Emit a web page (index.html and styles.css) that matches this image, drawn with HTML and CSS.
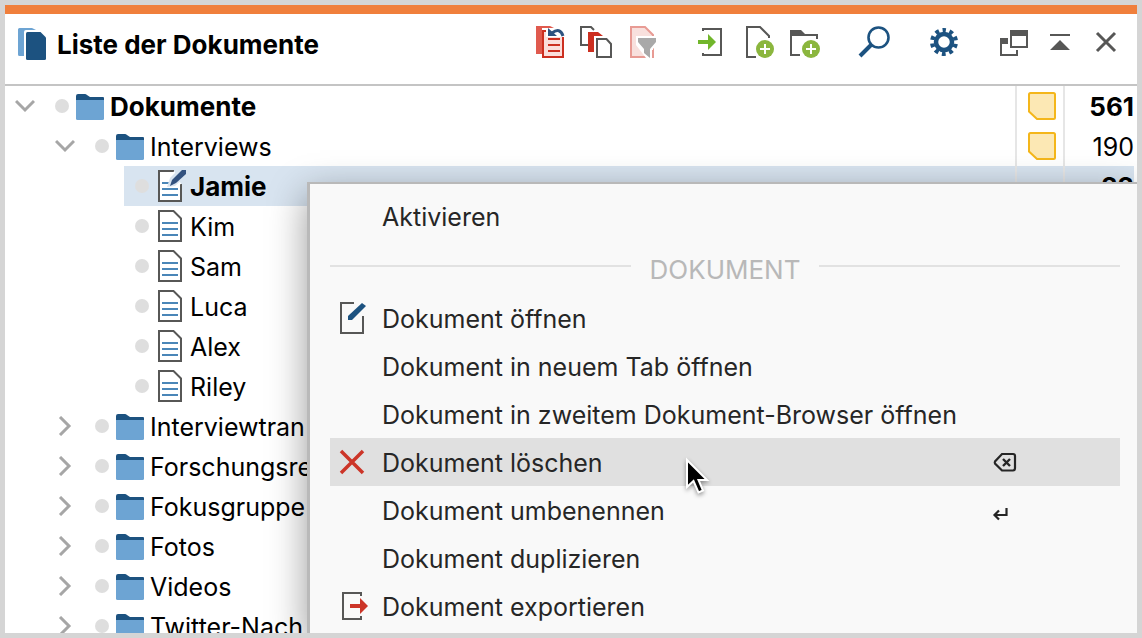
FILE: index.html
```
<!DOCTYPE html>
<html lang="de">
<head>
    <meta charset="UTF-8">
    <title>Liste der Dokumente</title>
    <link rel="stylesheet" href="styles.css">
</head>
<body>

    <!-- Shared icons -->
    <svg class="sprite" aria-hidden="true">
        <symbol id="folder" viewBox="0 0 28 28">
            <path d="M0 9V4Q0 2 2 2H9Q10 2 11 3L14 5H27Q28 5 28 6V9Z" fill="#1c5280"/>
            <path d="M0 8H28V26.500Q28 28 26.500 28H1.500Q0 28 0 26.500Z" fill="#6da4d3"/>
        </symbol>
        <symbol id="doc" viewBox="0 0 28 32">
            <path d="M3 1H17.500L25 8.500V31H3Z" fill="#fff" stroke="#575756" stroke-width="2"/>
            <path d="M6 13H22M6 19H22M6 25H22" stroke="#4a86b8" stroke-width="2"/>
        </symbol>
        <symbol id="memo" viewBox="0 0 28 28">
            <path d="M2.500 1H25.500Q27 1 27 2.500V25.500Q27 27 25.500 27H9L1 19.500V2.500Q1 1 2.500 1Z" fill="#fce8b4" stroke="#f4b61a" stroke-width="2"/>
        </symbol>
        <symbol id="down" viewBox="0 0 20 20">
            <path d="M1 5L10 14L19 5" fill="none" stroke="#a6a6a6" stroke-width="3"/>
        </symbol>
        <symbol id="right" viewBox="0 0 20 20">
            <path d="M5 1L14 10L5 19" fill="none" stroke="#a6a6a6" stroke-width="3"/>
        </symbol>
    </svg>

    <div class="panel">
        <header class="header">
            <svg class="logo" viewBox="0 0 28 32">
                <path d="M1.500 0H14L18 2H8Q6 2 6 4V28H1.500Q0 28 0 26.500V1.500Q0 0 1.500 0Z" fill="#6da4d3"/>
                <path d="M9.500 4H22.500L28 9.500V30.500Q28 32 26.500 32H9.500Q8 32 8 30.500V5.500Q8 4 9.500 4Z" fill="#1c5280"/>
            </svg>
            <h1 class="title">Liste der Dokumente</h1>

            <div class="tool-group">
                <button class="tool" aria-label="Aktivierungen zurücksetzen">
                    <svg viewBox="0 0 32 32">
                        <path d="M2 0H16L20 2H8V28H2Z" fill="#e05a4e"/>
                        <path d="M9 5H29V31H9Z" fill="#fbdedb" stroke="#cc2f20" stroke-width="2"/>
                        <path d="M14 13H26M14 19H26M14 25H26" stroke="#cc2f20" stroke-width="2"/>
                        <path d="M12 2H31V11H12Z" fill="#fff"/>
                        <path d="M18 7Q26 1 29 10" fill="none" stroke="#2d527f" stroke-width="3"/>
                        <path d="M14 2V10H23Z" fill="#2d527f"/>
                    </svg>
                </button>
                <button class="tool" aria-label="Aktivierte Dokumente">
                    <svg viewBox="0 0 32 32">
                        <path d="M14 4L11 1H1V19H8" fill="none" stroke="#575756" stroke-width="2"/>
                        <path d="M8 6H18L23 10H14V26H8Z" fill="#cc2f20"/>
                        <path d="M17 13H26.500L31 18V31H17Z" fill="#fff" stroke="#575756" stroke-width="2"/>
                    </svg>
                </button>
                <button class="tool" aria-label="Filter">
                    <svg viewBox="0 0 32 32">
                        <path d="M5 1H19L27 9V31H5Z" fill="#f8e0dd" stroke="#e89b94" stroke-width="2"/>
                        <path d="M10 10H32V17L27 23V32H20L10 19Z" fill="#fff"/>
                        <path d="M12 12H30V16L24 23V32L18 27V23L12 16Z" fill="#a9a9a9"/>
                        <path d="M27 24V32" stroke="#e89b94" stroke-width="2"/>
                    </svg>
                </button>
            </div>

            <div class="tool-group">
                <button class="tool" aria-label="Dokumente importieren">
                    <svg viewBox="0 0 32 32">
                        <path d="M7 5V3H25V29H7V27" fill="none" stroke="#575756" stroke-width="2"/>
                        <path d="M2 14H12V8L20 16L12 24V18H2Z" fill="#71b62b"/>
                    </svg>
                </button>
                <button class="tool" aria-label="Neues Textdokument">
                    <svg viewBox="0 0 32 32">
                        <path d="M14 31H5V1H18L27 10V12" fill="none" stroke="#575756" stroke-width="2"/>
                        <circle cx="23" cy="23" r="9" fill="#8bb63e"/>
                        <path d="M23 18V28M18 23H28" stroke="#fff" stroke-width="2"/>
                    </svg>
                </button>
                <button class="tool" aria-label="Neue Dokumentgruppe">
                    <svg viewBox="0 0 32 32">
                        <path d="M2 4H13L17 8H30V13H28V10H4V28H12V30H2Z" fill="#575756"/>
                        <circle cx="23" cy="23" r="9" fill="#8bb63e"/>
                        <path d="M23 18V28M18 23H28" stroke="#fff" stroke-width="2"/>
                    </svg>
                </button>
            </div>

            <div class="tool-group">
                <button class="tool" aria-label="Suchen">
                    <svg viewBox="0 0 32 32">
                        <circle cx="20.500" cy="11.500" r="10" fill="none" stroke="#1c5280" stroke-width="2.600"/>
                        <path d="M13 19L2 30" stroke="#1c5280" stroke-width="4"/>
                    </svg>
                </button>
            </div>

            <div class="tool-group">
                <button class="tool" aria-label="Einstellungen">
                    <svg viewBox="0 0 32 32">
                        <circle cx="16" cy="16" r="8" fill="none" stroke="#1c5280" stroke-width="4.500"/>
                        <circle cx="16" cy="16" r="11.800" fill="none" stroke="#1c5280" stroke-width="4.400" stroke-dasharray="3.800 3.614" stroke-dashoffset="1.900" transform="rotate(-90 16 16)"/>
                    </svg>
                </button>
            </div>

            <div class="tool-group">
                <button class="tool" aria-label="Abdocken">
                    <svg viewBox="0 0 32 32">
                        <path d="M12 4H30V22H12ZM14 10V20H28V10Z" fill="#575756" fill-rule="evenodd"/>
                        <path d="M2 12H10V18H4V28H18V24H20V30H2Z" fill="#575756"/>
                    </svg>
                </button>
                <button class="tool" aria-label="Minimieren">
                    <svg viewBox="0 0 32 32">
                        <path d="M6 8H26V10H6ZM16 14L26 24H6Z" fill="#575756"/>
                    </svg>
                </button>
                <button class="tool" aria-label="Schließen">
                    <svg viewBox="0 0 32 32">
                        <path d="M7 7L25 25M25 7L7 25" stroke="#575756" stroke-width="3"/>
                    </svg>
                </button>
            </div>
        </header>

        <!-- Document tree -->
        <ul class="tree">
            <li class="row root">
                <button class="twisty" aria-label="Einklappen"><svg><use href="#down"/></svg></button>
                <span class="dot"></span>
                <svg class="icon"><use href="#folder"/></svg>
                <span class="name">Dokumente</span>
                <span class="memo"><svg><use href="#memo"/></svg></span>
                <span class="count">561</span>
            </li>
            <li class="row group">
                <button class="twisty" aria-label="Einklappen"><svg><use href="#down"/></svg></button>
                <span class="dot"></span>
                <svg class="icon"><use href="#folder"/></svg>
                <span class="name">Interviews</span>
                <span class="memo"><svg><use href="#memo"/></svg></span>
                <span class="count">190</span>
            </li>
            <li class="row doc selected">
                <span class="dot"></span>
                <svg class="icon" viewBox="0 0 28 32">
                    <path d="M18 1H3V31H25V14" fill="#fff" stroke="#575756" stroke-width="2"/>
                    <path d="M18 1L25 14L16 17L12 14Z" fill="#fff"/>
                    <path d="M6 13H13M6 19H22M6 25H22" stroke="#4a86b8" stroke-width="2"/>
                    <path d="M11 17L14 8L22 0H30V6L19 16Z" fill="#d8e4f0"/>
                    <path d="M14 16L16 10L26 0H30V4L20 13Z" fill="#33527f"/>
                </svg>
                <span class="name">Jamie</span>
                <span class="memo"></span>
                <span class="count">22</span>
            </li>
            <li class="row doc">
                <span class="dot"></span>
                <svg class="icon"><use href="#doc"/></svg>
                <span class="name">Kim</span>
                <span class="memo"></span>
                <span class="count"></span>
            </li>
            <li class="row doc">
                <span class="dot"></span>
                <svg class="icon"><use href="#doc"/></svg>
                <span class="name">Sam</span>
                <span class="memo"></span>
                <span class="count"></span>
            </li>
            <li class="row doc">
                <span class="dot"></span>
                <svg class="icon"><use href="#doc"/></svg>
                <span class="name">Luca</span>
                <span class="memo"></span>
                <span class="count"></span>
            </li>
            <li class="row doc">
                <span class="dot"></span>
                <svg class="icon"><use href="#doc"/></svg>
                <span class="name">Alex</span>
                <span class="memo"></span>
                <span class="count"></span>
            </li>
            <li class="row doc">
                <span class="dot"></span>
                <svg class="icon"><use href="#doc"/></svg>
                <span class="name">Riley</span>
                <span class="memo"></span>
                <span class="count"></span>
            </li>
            <li class="row group">
                <button class="twisty" aria-label="Ausklappen"><svg><use href="#right"/></svg></button>
                <span class="dot"></span>
                <svg class="icon"><use href="#folder"/></svg>
                <span class="name">Interviewtran</span>
            </li>
            <li class="row group">
                <button class="twisty" aria-label="Ausklappen"><svg><use href="#right"/></svg></button>
                <span class="dot"></span>
                <svg class="icon"><use href="#folder"/></svg>
                <span class="name">Forschungsre</span>
            </li>
            <li class="row group">
                <button class="twisty" aria-label="Ausklappen"><svg><use href="#right"/></svg></button>
                <span class="dot"></span>
                <svg class="icon"><use href="#folder"/></svg>
                <span class="name">Fokusgruppe</span>
            </li>
            <li class="row group">
                <button class="twisty" aria-label="Ausklappen"><svg><use href="#right"/></svg></button>
                <span class="dot"></span>
                <svg class="icon"><use href="#folder"/></svg>
                <span class="name">Fotos</span>
            </li>
            <li class="row group">
                <button class="twisty" aria-label="Ausklappen"><svg><use href="#right"/></svg></button>
                <span class="dot"></span>
                <svg class="icon"><use href="#folder"/></svg>
                <span class="name">Videos</span>
            </li>
            <li class="row group">
                <button class="twisty" aria-label="Ausklappen"><svg><use href="#right"/></svg></button>
                <span class="dot"></span>
                <svg class="icon"><use href="#folder"/></svg>
                <span class="name">Twitter-Nach</span>
            </li>
        </ul>

        <!-- Context menu -->
        <div class="menu" role="menu">
            <button class="item" role="menuitem">
                <span class="item-icon"></span>
                <span class="label">Aktivieren</span>
            </button>
            <div class="section"><span>DOKUMENT</span></div>
            <button class="item" role="menuitem">
                <span class="item-icon">
                    <svg viewBox="0 0 28 32">
                        <path d="M14 1H1V31H23V14" fill="none" stroke="#575756" stroke-width="2"/>
                        <path d="M8 18V14L22 1L26 4L12 18Z" fill="#1c5280"/>
                    </svg>
                </span>
                <span class="label">Dokument öffnen</span>
            </button>
            <button class="item" role="menuitem">
                <span class="item-icon"></span>
                <span class="label">Dokument in neuem Tab öffnen</span>
            </button>
            <button class="item" role="menuitem">
                <span class="item-icon"></span>
                <span class="label">Dokument in zweitem Dokument-Browser öffnen</span>
            </button>
            <button class="item active" role="menuitem">
                <span class="item-icon">
                    <svg viewBox="0 0 28 32">
                        <path d="M1 5L23 27M23 5L1 27" stroke="#cc3528" stroke-width="3.500"/>
                    </svg>
                </span>
                <span class="label">Dokument löschen</span>
                <svg class="shortcut" viewBox="0 0 24 24">
                    <path d="M10 4H21Q23 4 23 6V18Q23 20.500 21 20.500H10L3 13.500Q2.500 12.500 3 11.500Z" fill="none" stroke="#262626" stroke-width="2.200"/>
                    <path d="M11 9L18 16M18 9L11 16" stroke="#262626" stroke-width="2.400"/>
                </svg>
            </button>
            <button class="item" role="menuitem">
                <span class="item-icon"></span>
                <span class="label">Dokument umbenennen</span>
                <svg class="shortcut" viewBox="0 0 24 24">
                    <path d="M14.500 10V17H3M7 12.500L2.500 17L7 21.500" fill="none" stroke="#262626" stroke-width="2.200"/>
                </svg>
            </button>
            <button class="item" role="menuitem">
                <span class="item-icon"></span>
                <span class="label">Dokument duplizieren</span>
            </button>
            <button class="item" role="menuitem">
                <span class="item-icon">
                    <svg viewBox="0 0 28 32">
                        <path d="M21 6V3H3V29H21V26" fill="none" stroke="#575756" stroke-width="2"/>
                        <path d="M10 14H20V8L28 16L20 24V18H10Z" fill="#cc3528"/>
                    </svg>
                </span>
                <span class="label">Dokument exportieren</span>
            </button>
        </div>

        <svg class="cursor" viewBox="0 0 24 38">
            <path d="M1 1V28L7.500 22L12.500 33.500L17 31.500L12.500 21H21Z" fill="#000" stroke="#fff" stroke-width="2"/>
        </svg>
    </div>

</body>
</html>
```
FILE: styles.css
```
* {
    box-sizing: border-box;
}

body {
    font-family: Inter, "Liberation Sans", sans-serif;
    font-size: 25px;
    font-optical-sizing: none;
    line-height: 40px;
    background-color: #d5d5d5;
    margin: 0;
    padding: 5px;
    height: 100vh;
    color: #000;
}

button {
    font: inherit;
    font-optical-sizing: inherit;
    color: inherit;
    background: none;
    border: none;
    margin: 0;
    padding: 0;
}

svg {
    display: block;
    flex: none;
    overflow: visible;
}

.sprite {
    position: absolute;
    width: 0;
    height: 0;
}

.panel {
    position: relative;
    height: 100%;
    background-color: #fff;
    border-top: 9px solid #f07f3c;
    overflow: hidden;
}

/* Header */
.header {
    display: flex;
    align-items: flex-start;
    gap: 38px;
    height: 72px;
    padding: 12px 15px 0 13px;
    border-bottom: 2px solid #c4c4c4;
}

.logo {
    width: 28px;
    height: 32px;
    margin-top: 2px;
    margin-right: -27px;
}

.title {
    flex: 1;
    margin: 0;
    font-size: 26px;
    line-height: 38px;
    font-weight: 700;
    white-space: nowrap;
}

.tool-group {
    display: flex;
    gap: 14px;
}

.tool svg {
    width: 32px;
    height: 32px;
}

/* Tree */
.tree {
    list-style: none;
    margin: 0;
    padding: 0;
}

.row {
    display: flex;
    align-items: center;
    height: 40px;
    padding-right: 3px;
}

.root {
    padding-left: 10px;
    font-size: 26px;
    font-weight: 700;
}

.group {
    padding-left: 50px;
}

.doc {
    margin-left: 119px;
    padding-left: 11px;
}

.selected {
    background: linear-gradient(#d8e4f0, #d8e4f0) no-repeat 0 0 / calc(100% - 3px) 100%;
    font-size: 26px;
    font-weight: 700;
}

.twisty {
    margin-right: 20px;
}

.twisty svg {
    width: 20px;
    height: 20px;
}

.dot {
    width: 14px;
    height: 14px;
    margin-right: 7px;
    border-radius: 50%;
    background-color: #dedede;
}

.icon {
    width: 28px;
    height: 28px;
    margin-right: 6px;
}

.doc .icon {
    height: 32px;
}

.name {
    flex: 1;
    padding-top: 2px;
    white-space: nowrap;
}

.memo {
    display: flex;
    align-items: center;
    width: 48px;
    height: 40px;
    padding-left: 11px;
    border-left: 2px solid #e6e6e6;
}

.memo svg {
    width: 28px;
    height: 28px;
}

.count {
    width: 71px;
    height: 40px;
    padding-top: 1px;
    border-left: 2px solid #e6e6e6;
    text-align: right;
}

/* Context menu */
.menu {
    position: absolute;
    top: 168px;
    left: 302px;
    right: 0;
    bottom: 0;
    padding: 8px 17px 0 20px;
    overflow: hidden;
    background-color: #f9f9f9;
    border-top: 2px solid #b9b9b9;
    border-left: 3px solid #b9b9b9;
    box-shadow: 0 12px 36px rgba(0, 0, 0, 0.4);
    color: #262626;
}

.item {
    display: flex;
    align-items: center;
    width: 100%;
    height: 48px;
    padding-left: 10px;
    text-align: left;
    white-space: nowrap;
}

.item.active {
    background-color: #e0e0e0;
}

.item-icon {
    width: 28px;
    margin-right: 14px;
}

.item-icon svg {
    width: 28px;
    height: 32px;
}

.label {
    padding-top: 2px;
}

.shortcut {
    width: 24px;
    height: 24px;
    margin-left: auto;
    margin-right: 104px;
}

.section {
    display: flex;
    align-items: center;
    gap: 19px;
    height: 52px;
    margin-bottom: 2px;
    font-size: 26px;
    color: #b8b8b8;
}

.section span {
    padding-top: 8px;
}

.section::before,
.section::after {
    content: "";
    flex: 1;
    height: 2px;
    background-color: #e2e2e2;
}

.cursor {
    position: absolute;
    top: 445px;
    left: 681px;
    width: 24px;
    height: 38px;
    filter: drop-shadow(0 2px 2px rgba(0, 0, 0, 0.4));
}
```
